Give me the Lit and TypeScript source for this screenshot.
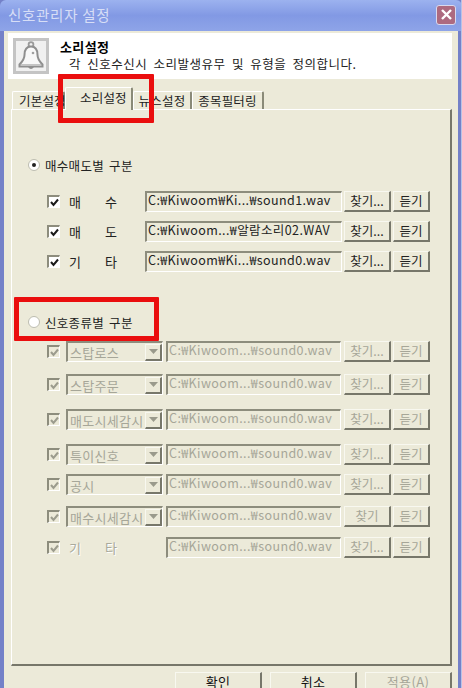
import { LitElement, html, css, svg } from "lit";
import { customElement } from "lit/decorators.js";

const activeRows = [
  { a: "매", b: "수", path: "C:₩Kiwoom₩Ki...₩sound1.wav", gap: 0 },
  { a: "매", b: "도", path: "C:₩Kiwoom...₩알람소리02.WAV", gap: 9 },
  { a: "기", b: "타", path: "C:₩Kiwoom₩Ki...₩sound0.wav", gap: 9 },
];
const disabledRows = [
  { name: "스탑로스", gap: 0, find: "찾기..." },
  { name: "스탑주문", gap: 12, find: "찾기..." },
  { name: "매도시세감시", gap: 14, find: "찾기..." },
  { name: "특이신호", gap: 14, find: "찾기..." },
  { name: "공시", gap: 9, find: "찾기..." },
  { name: "매수시세감시", gap: 11, find: "찾기" },
  { name: "", gap: 10, find: "찾기..." },
];

const check = svg`<svg width="9" height="9" viewBox="0 0 9 9"><path d="M1 4 L3.5 7 L8 1.5" fill="none" stroke="currentColor" stroke-width="2"/></svg>`;
const arrow = svg`<svg width="9" height="5" viewBox="0 0 9 5"><path d="M0 0 H9 L4.5 5 Z" fill="currentColor"/></svg>`;

@customElement("app-root")
export class AppRoot extends LitElement {
  static styles = css`
    :host { display: block; width: 462px; height: 688px; overflow: hidden; background: #7f8fd0;
      font-family: "Noto Sans CJK KR", "Liberation Sans", sans-serif; font-size: 13px; color: #1c1c1c; }
    .window { position: relative; width: 462px; height: 688px; box-sizing: border-box; padding: 0 3px 0 4px; display: flex; flex-direction: column;
      background: #7481c8; border-right: 1px solid #b9c2e6; overflow: hidden; }
    .title { height: 31px; flex: none; display: flex; align-items: center; justify-content: space-between;
      background: linear-gradient(#9cb2ef, #8299e4 50%, #8ea4e8); color: #d7def6; font-size: 14.5px; letter-spacing: 0.7px; margin: 0 -4px 0 -4px; padding: 0 6px 2px 8px; box-sizing: border-box; border-radius: 6px 6px 0 0; }
    .close { width: 20px; height: 20px; box-sizing: border-box; border: 1px solid #d9d9ee; border-radius: 3px; background: #ad6a80; display: flex; align-items: center; justify-content: center; }
    .body { flex: 1; background: #ecead9; display: flex; flex-direction: column; padding: 2px 6px 0 4px; min-height: 0; }
    .head { height: 46px; flex: none; background: #fff; display: flex; gap: 11px; padding: 5px 0 0 5px; box-sizing: border-box; }
    .bell { width: 36px; height: 36px; box-sizing: border-box; border: 3px solid #c4c4c4; background: #f0f0f0; display: flex; align-items: center; justify-content: center; flex: none; }
    .h1 { font-weight: 700; font-size: 13px; line-height: 16px; margin-top: 1px; color: #000; letter-spacing: .4px; }
    .h2 { font-size: 12.5px; line-height: 16px; margin-top: 1px; padding-left: 9px; letter-spacing: .5px; word-spacing: 3px; color: #222; }
    .tabs { display: flex; align-items: flex-end; height: 30px; flex: none; padding-left: 4px; }
    .tab { height: 18px; box-sizing: border-box; border: 1px solid #fff; border-bottom: none; border-right: 2px solid #8a8a78; border-radius: 2px 2px 0 0;
      display: flex; align-items: center; justify-content: center; font-size: 12.5px; letter-spacing: .2px; color: #222; white-space: nowrap; }
    .tab.on { height: 23px; position: relative; top: 1px; z-index: 1; background: #ecead9; padding: 0 0 3px 14px; justify-content: flex-start; }
    .w1 { width: 53px; padding-left: 6px; justify-content: flex-start; overflow: visible; }
    .w2 { width: 68px; } .w3 { width: 59px; } .w4 { width: 72px; }
    .panel { flex: none; height: 557px; box-sizing: border-box; border: 1px solid #fff; border-right: 2px solid #77776a; border-bottom: 2px solid #77776a; margin-left: 3px; width: 441px; }
    .radio-row { display: flex; align-items: center; gap: 5px; height: 18px; padding-left: 16px; }
    .radio-row.first { margin-top: 46px; }
    .radio-row.second { margin-top: 41px; }
    .radio { width: 12px; height: 12px; box-sizing: border-box; border-radius: 50%; border: 1px solid #bdbdb0; background: #fff; display: flex; align-items: center; justify-content: center; flex: none; }
    .dot { width: 4px; height: 4px; border-radius: 50%; background: #222; }
    .rlabel { font-size: 12.5px; letter-spacing: .3px; word-spacing: 2px; color: #222; }
    .rows-a { margin-top: 17px; }
    .rows-d { margin-top: 10px; }
    .row { display: flex; align-items: center; height: 21px; padding-left: 35px; }
    .cb { width: 13px; height: 13px; box-sizing: border-box; border: 1px solid #fff; border-top: 2px solid #8d8d7d; border-left: 2px solid #8d8d7d; background: #fff; color: #1a1a1a; display: flex; align-items: center; justify-content: center; flex: none; }
    .off .cb { background: #ecead9; color: #9c9c8e; }
    .pair { display: flex; justify-content: space-between; width: 48px; margin-left: 9px; flex: none; font-size: 13px; color: #222; }
    .off .pair { color: #aaaa9c; text-shadow: 1px 1px 0 #fff; margin-right: 49px; }
    .field { height: 21px; box-sizing: border-box; border: 1px solid #fff; border-top: 2px solid #8d8d7d; border-left: 2px solid #8d8d7d; font-size: 12.5px; line-height: 14px; padding-left: 1px; white-space: nowrap; overflow: hidden; letter-spacing: .4px; color: #222; flex: none; }
    .f-a { width: 197px; margin-left: 28px; }
    .f-d { width: 175px; color: #a6a698; }
    .combo + .f-d { margin-left: 3px; }
    .btn { height: 21px; box-sizing: border-box; border: 1px solid #f8f8f0; border-right: 2px solid #77776a; border-bottom: 2px solid #77776a; display: flex; align-items: center; justify-content: center; font-size: 12.5px; color: #222; flex: none; padding-bottom: 1px; }
    .off .btn { color: #a6a698; }
    .b1 { width: 47px; margin-left: 2px; } .b2 { width: 37px; margin-left: 2px; }
    .off .b1 { margin-left: 3px; }
    .combo { width: 97px; height: 21px; box-sizing: border-box; margin-left: 6px; border: 1px solid #fff; border-top: 2px solid #8d8d7d; border-left: 2px solid #8d8d7d; display: flex; align-items: center; justify-content: space-between; flex: none; color: #a6a698; font-size: 13px; letter-spacing: .3px; white-space: nowrap; overflow: hidden; padding-left: 2px; }
    .drop { width: 17px; height: 17px; box-sizing: border-box; border: 1px solid #f8f8f0; border-right: 2px solid #77776a; border-bottom: 2px solid #77776a; display: flex; align-items: center; justify-content: center; color: #9a9a8c; flex: none; background: #ecead9; }
    .foot { display: flex; justify-content: flex-end; gap: 8px; margin-top: 6px; flex: none; }
    .fbtn { width: 87px; height: 22px; box-sizing: border-box; border: 1px solid #f8f8f0; border-right: 2px solid #77776a; display: flex; align-items: flex-start; justify-content: center; font-size: 13px; line-height: 18px; color: #111; letter-spacing: .4px; }
    .fbtn.dis { color: #a6a698; }
    .mark { position: absolute; box-sizing: border-box; border: 5px solid #ea0e0e; z-index: 5; pointer-events: none; border-radius: 1px; }
    .m1 { left: 58px; top: 74px; width: 96px; height: 49px; }
    .m2 { left: 14px; top: 297px; width: 145px; height: 44px; }
  `;

  private bell() {
    return html`<svg width="28" height="30" viewBox="0 0 28 30">
      <circle cx="14" cy="3.5" r="2.4" fill="none" stroke="#9a9a9a" stroke-width="1.8"/>
      <path d="M14 5.5 C8.5 5.5 7.5 10 7.5 14 C7.5 18 6 20 2.5 23.5 V25.5 H25.5 V23.5 C22 20 20.5 18 20.5 14 C20.5 10 19.5 5.5 14 5.5 Z" fill="#f8f8f8" stroke="#8f8f8f" stroke-width="2"/>
      <path d="M4 23.5 H24" stroke="#c4c4c4" stroke-width="1"/>
      <circle cx="16" cy="12" r="1.3" fill="#a0a0a0"/>
      <path d="M11 26 Q14 30 17 26 Z" fill="#8f8f8f"/>
    </svg>`;
  }

  render() {
    return html`<div class="window">
      <div class="title"><span>신호관리자 설정</span>
        <div class="close"><svg width="13" height="13" viewBox="0 0 13 13"><path d="M2 2 L11 11 M11 2 L2 11" stroke="#fff" stroke-width="2.4"/></svg></div>
      </div>
      <div class="body">
        <div class="head">
          <div class="bell">${this.bell()}</div>
          <div><div class="h1">소리설정</div><div class="h2">각 신호수신시 소리발생유무 및 유형을 정의합니다.</div></div>
        </div>
        <div class="tabs">
          <div class="tab w1">기본설정</div><div class="tab on w2">소리설정</div><div class="tab w3">뉴스설정</div><div class="tab w4">종목필터링</div>
        </div>
        <div class="panel">
          <div class="radio-row first"><span class="radio"><span class="dot"></span></span><span class="rlabel">매수매도별 구분</span></div>
          <div class="rows-a">
            ${activeRows.map((r) => html`<div class="row" style="margin-top:${r.gap}px">
              <span class="cb">${check}</span>
              <span class="pair">${r.a}<span>${r.b}</span></span>
              <span class="field f-a">${r.path}</span>
              <span class="btn b1">찾기...</span><span class="btn b2">듣기</span>
            </div>`)}
          </div>
          <div class="radio-row second"><span class="radio"></span><span class="rlabel">신호종류별 구분</span></div>
          <div class="rows-d off">
            ${disabledRows.map((r) => html`<div class="row" style="margin-top:${r.gap}px">
              <span class="cb">${check}</span>
              ${r.name
                ? html`<span class="combo">${r.name}<span class="drop">${arrow}</span></span>`
                : html`<span class="pair">기<span>타</span></span>`}
              <span class="field f-d">C:₩Kiwoom...₩sound0.wav</span>
              <span class="btn b1">${r.find}</span><span class="btn b2">듣기</span>
            </div>`)}
          </div>
        </div>
        <div class="foot">
          <div class="fbtn">확인</div><div class="fbtn">취소</div><div class="fbtn dis">적용(A)</div>
        </div>
      </div>
      <div class="mark m1"></div>
      <div class="mark m2"></div>
    </div>`;
  }
}
